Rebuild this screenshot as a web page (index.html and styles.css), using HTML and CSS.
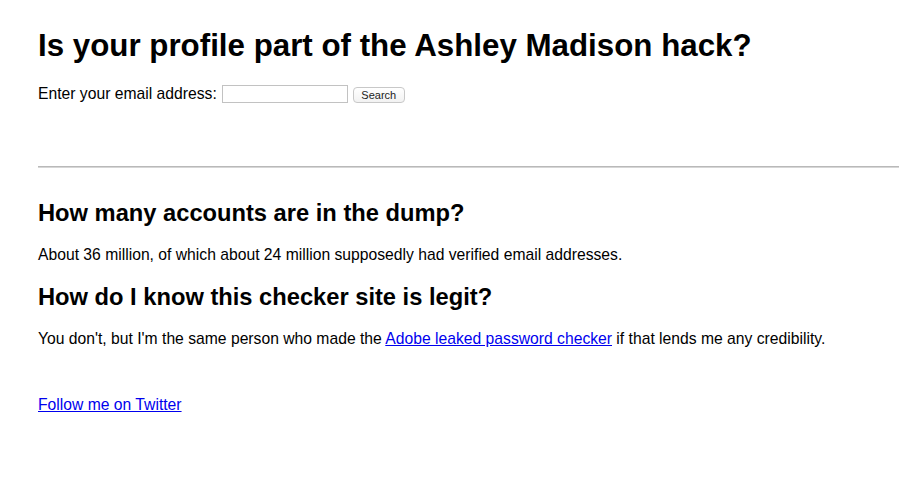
FILE: index.html
```html
<!DOCTYPE html>
<html>
<head>
<meta charset="utf-8">
<title>Ashley Madison hack checker</title>
<link rel="stylesheet" href="styles.css">
</head>
<body>
<div class="page">
  <h1 class="title">Is your profile part of the Ashley Madison hack?</h1>
  <form class="search">
    <label class="search-label">Enter your email address:</label>
    <input class="search-input" type="text">
    <button class="search-btn" type="button">Search</button>
  </form>
  <hr class="rule">
  <h2 class="q first">How many accounts are in the dump?</h2>
  <p class="a">About 36 million, of which about 24 million supposedly had verified email addresses.</p>
  <h2 class="q">How do I know this checker site is legit?</h2>
  <p class="a">You don't, but I'm the same person who made the <a href="#">Adobe leaked password checker</a> if that lends me any credibility.</p>
  <p class="follow"><a href="#">Follow me on Twitter</a></p>
</div>
</body>
</html>
```
FILE: styles.css
```css
html, body {
  margin: 0;
  padding: 0;
  background: #fff;
}
body {
  font-family: "Liberation Sans", Arial, Helvetica, sans-serif;
  font-size: 15.7px;
  color: #000;
}
.page {
  padding: 0 0 0 38px;
}
.title {
  font-size: 31.3px;
  font-weight: bold;
  margin: 0;
  padding-top: 28px;
  line-height: 36px;
  color: #000;
}
.search {
  display: flex;
  align-items: flex-end;
  margin-top: 21px;
  height: 18px;
}
.search-label {
  line-height: 18px;
  margin-right: 5px;
}
.search-input {
  width: 122px;
  height: 16px;
  border: 1px solid #c2c2c2;
  padding: 0 1px;
  margin: 0 5px 0 0;
  box-sizing: content-box;
  background: #fff;
}
.search-btn {
  font-family: "Liberation Sans", Arial, sans-serif;
  font-size: 11px;
  height: 16px;
  width: 52px;
  padding: 0;
  margin: 0;
  border: 1px solid #c8c8c8;
  border-radius: 4px;
  background: linear-gradient(#ffffff, #f2f2f2);
  color: #222;
  line-height: 14px;
}
.rule {
  margin: 63px 0 0 0;
  border: 0;
  border-top: 1px solid #b9b9b9;
  border-bottom: 1px solid #d6d6d6;
  height: 0;
}
.q {
  font-size: 23.7px;
  font-weight: bold;
  margin: 19px 0 0 0;
  color: #000;
  line-height: 28px;
}
.q.first {
  margin-top: 31px;
}
.a {
  margin: 19px 0 0 0;
  line-height: 18px;
}
.follow {
  margin: 48px 0 0 0;
  line-height: 18px;
}
a {
  color: #0000ee;
}
```
